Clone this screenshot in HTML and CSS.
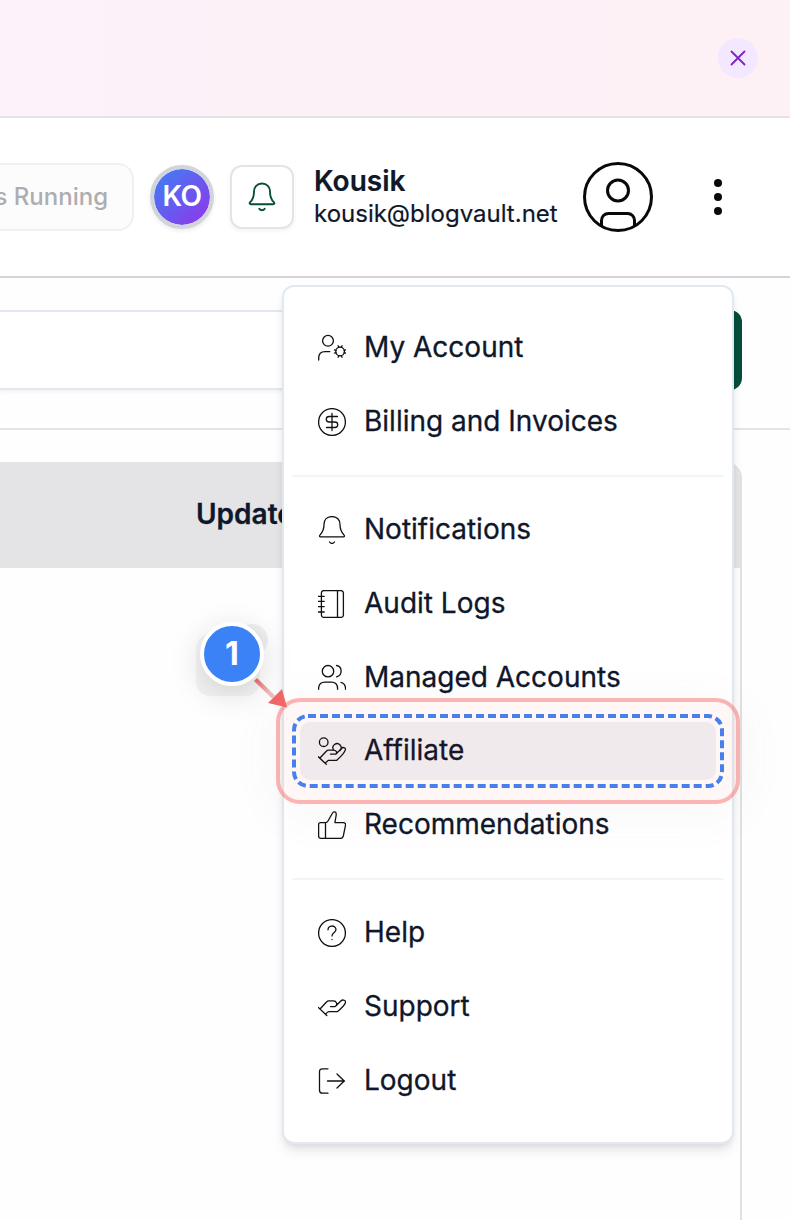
FILE: index.html
```html
<!DOCTYPE html>
<html lang="en">

<head>
    <meta charset="utf-8">
    <title>Dashboard</title>
    <link rel="stylesheet" href="styles.css">
</head>

<body>
    <div class="banner">
        <button class="close">
            <svg width="16" height="16" viewBox="0 0 16 16"><path d="M1.500 1.500l13 13M14.500 1.500l-13 13"/></svg>
        </button>
    </div>

    <div class="header">
        <div class="running"><span>s Running</span></div>
        <div class="avatar">KO</div>
        <div class="bell">
            <svg width="28" height="30" viewBox="0 0 28 30"><path d="M14 1.500c-5 0-8 3.500-8 8 0 6-1 8-3.800 10.600-1 1-.6 2.100.6 2.100h22.400c1.200 0 1.600-1.100.6-2.100C23 17.500 22 15.500 22 9.500c0-4.500-3-8-8-8zM11.300 26.800c1.300 2 4.100 2 5.400 0"/></svg>
        </div>
        <div class="user">
            <b>Kousik</b>
            <span>kousik@blogvault.net</span>
        </div>
        <svg class="profile" width="70" height="70" viewBox="0 0 70 70">
            <circle cx="35" cy="35" r="33.500"/>
            <circle cx="35" cy="28.500" r="10.500"/>
            <path d="M18.500 63v-4.500c0-4 3-7 7-7h19c4 0 7 3 7 7V63"/>
        </svg>
        <svg class="dots" width="8" height="36" viewBox="0 0 8 36"><circle cx="4" cy="4" r="4"/><circle cx="4" cy="18" r="4"/><circle cx="4" cy="32" r="4"/></svg>
    </div>

    <div class="toolbar">
        <div class="search"></div>
        <div class="add"></div>
    </div>

    <div class="table">
        <div class="thead">Updates</div>
    </div>

    <!-- dropdown -->
    <div class="menu">
        <a class="item">
            <svg class="icon" viewBox="0 0 28 28"><circle cx="10" cy="6.800" r="5.400"/><path d="M.7 26v-2c0-4 2.500-6.300 6.300-6.300h4.800"/><circle cx="22.100" cy="17.500" r="4.300"/><path d="M26.200 18.600l1.500.5M23.200 21.600l.9 1.600M21 21.600l-.9 1.600M18 18.600l-1.500.5M18 16.400l-1.500-.5M21 13.400l-.9-1.600M23.200 13.400l.9-1.600M26.200 16.400l1.500-.5"/></svg>
            <span>My Account</span>
        </a>
        <a class="item">
            <svg class="icon" viewBox="0 0 28 28"><circle cx="14" cy="14" r="13.400"/><path d="M14 5.500v17M19.500 8.500h-8.300c-3.900 0-3.900 5.500 0 5.500h5.600c3.900 0 3.900 5.500 0 5.500H8.500"/></svg>
            <span>Billing and Invoices</span>
        </a>
        <hr>
        <a class="item">
            <svg class="icon" viewBox="0 0 28 28"><path d="M14 .6c-5 0-8 3.300-8 7.900 0 5.500-1.200 7.500-3.900 10.400-.9 1-.6 1.900.5 1.900h22.800c1.100 0 1.400-.9.5-1.900C23.200 16 22 14 22 8.500 22 3.900 19 .6 14 .6zM11.500 26c1.200 1.900 3.800 1.900 5 0"/></svg>
            <span>Notifications</span>
        </a>
        <a class="item">
            <svg class="icon" viewBox="0 0 28 28"><rect x="3.400" y=".6" width="22" height="26.800" rx="2.500"/><path d="M19.500.6v26.800M.2 6.300h6M.2 11.400h6M.2 16.600h6M.2 22h6"/></svg>
            <span>Audit Logs</span>
        </a>
        <a class="item">
            <svg class="icon" viewBox="0 0 28 28"><circle cx="10" cy="7.200" r="5.700"/><path d="M.6 25.300v-.6c0-4 2.400-6.600 6.400-6.600h6.200c4 0 6.400 2.600 6.400 6.600v.6M18.600 1.500c6 1 6 10.200 0 11.300M23 18.300c3.200.8 4.600 3.200 4.600 7"/></svg>
            <span>Managed Accounts</span>
        </a>
        <a class="item active">
            <svg class="icon" viewBox="0 0 28 28"><circle cx="5.700" cy="5.200" r="4.300"/><path d="M15.600 13a4.100 4.100 0 1 1 6.400.6"/><path d="M.3 19.800l8 7.500M2 21l6.300-6.800c.7-.8 1.500-1 2.500-1h4.500c2.500 0 4.500 2 2.500 4h-5.300M18 17l5.500-5.500c2-2 4.800-.5 3.700 1.700-.7 2.600-4.200 6.300-8.400 10.100H10.500l-3 2.400"/></svg>
            <span>Affiliate</span>
        </a>
        <a class="item">
            <svg class="icon" viewBox="0 0 28 28"><path d="M7.500 11.600H2.600c-1.300 0-2 .7-2 2v11.300c0 1.600.8 2.500 2.400 2.500h19.300c1.700 0 2.600-.8 3-2.400l2.200-10.700c.3-1.700-.5-2.700-2.200-2.700h-8.400L18.200 4c.4-3.500-2.600-4.200-4-1.500L10 10c-.6 1.100-1.400 1.600-2.500 1.600zM7.500 11.600v15.800"/></svg>
            <span>Recommendations</span>
        </a>
        <hr>
        <a class="item">
            <svg class="icon" viewBox="0 0 28 28"><circle cx="14" cy="14" r="13.400"/><path d="M10 10.800c0-5 8-5 8-.2 0 3.100-4 3.300-4 6.300M14 20.400v.2"/></svg>
            <span>Help</span>
        </a>
        <a class="item">
            <svg class="icon" viewBox="0 0 28 28"><path d="M.3 14.500l8.500 8M2 16l6.500-7c.7-.8 1.500-1.100 2.500-1.100h4.500c3 0 4.300 3.500 2 5.300-.5.400-1 .4-1.800.4h-3.200M17.800 13l5-5c2-2 5.500-.6 4.600 1.700-.9 2.600-4.400 6-8.100 9H11c-1 0-2.200.8-3.200 2.300"/></svg>
            <span>Support</span>
        </a>
        <a class="item">
            <svg class="icon" viewBox="0 0 28 28"><path d="M10 1.800H4.500c-2 0-3 1-3 3v18.400c0 2 1 3 3 3H10M9.500 14h17M19 7l7.200 7-7.200 7"/></svg>
            <span>Logout</span>
        </a>
    </div>

    <!-- step marker over the menu -->
    <div class="highlight">
        <svg width="432" height="74" viewBox="0 0 432 74"><rect x="2" y="2" width="428" height="70" rx="14"/></svg>
    </div>
    <div class="badge-shade"></div>
    <div class="badge-chip"></div>
    <svg class="arrow" width="36" height="34" viewBox="0 0 36 34">
        <defs>
            <linearGradient id="fade" x1="0" y1="0" x2="1" y2="1">
                <stop offset="0" stop-color="#e66363"/>
                <stop offset="0.700" stop-color="#f0bcbc"/>
            </linearGradient>
        </defs>
        <path d="M0 3l3-3 18 17.500-3 3z" fill="url(#fade)"/>
        <path d="M28 11L33 29.500 14 25z" fill="#f16666"/>
    </svg>
    <div class="badge">1</div>
</body>

</html>
```

FILE: styles.css
```css
* {
    box-sizing: border-box;
}

body {
    position: relative;
    width: 790px;
    height: 1220px;
    margin: 0;
    overflow: hidden;
    display: flex;
    flex-direction: column;
    background: #fefefe;
    color: #0f172a;
    font-family: Inter, "Liberation Sans", sans-serif;
}

svg {
    display: block;
    flex: none;
    fill: none;
    stroke-linecap: round;
    stroke-linejoin: round;
}

/* banner */
.banner {
    flex: none;
    height: 118px;
    padding: 0 32px;
    display: flex;
    align-items: center;
    justify-content: flex-end;
    border-bottom: 2px solid #e4e4e7;
    background: linear-gradient(90deg, #fdf1fa, #fdf1f6);
}

.close {
    width: 40px;
    height: 40px;
    padding: 0;
    display: flex;
    align-items: center;
    justify-content: center;
    border: 0;
    border-radius: 50%;
    background: #f3e8ff;
}

.close svg {
    stroke: #7e22ce;
    stroke-width: 1.8;
}

/* header */
.header {
    flex: none;
    height: 160px;
    display: flex;
    align-items: center;
    border-bottom: 2px solid #d4d4d8;
    background: #fff;
}

.running {
    width: 134px;
    height: 68px;
    padding: 0 24px 2px 0;
    display: flex;
    align-items: center;
    justify-content: flex-end;
    border: 2px solid #f0f0f1;
    border-left: 0;
    border-radius: 0 16px 16px 0;
    background: #fcfcfc;
    color: #adadb1;
    font-size: 24px;
    font-weight: 500;
    white-space: nowrap;
}

.avatar {
    width: 64px;
    height: 64px;
    margin-left: 16px;
    border: 4px solid #d1d5db;
    border-radius: 50%;
    background: linear-gradient(135deg, #3b82f6, #9333ea) padding-box;
    box-shadow: 0 2px 4px rgba(0, 0, 0, .08);
    color: #fff;
    font-size: 28px;
    font-weight: 600;
    line-height: 54px;
    text-align: center;
    letter-spacing: -.5px;
}

.bell {
    width: 64px;
    height: 64px;
    margin-left: 16px;
    display: flex;
    align-items: center;
    justify-content: center;
    border: 2px solid #e4e4e7;
    border-radius: 12px;
    background: #fff;
    box-shadow: 0 2px 4px rgba(0, 0, 0, .05);
}

.bell svg {
    stroke: #064e3b;
    stroke-width: 1.9;
}

.user {
    width: 269px;
    margin-left: 20px;
    display: flex;
    flex-direction: column;
    font-size: 24px;
    line-height: 32px;
    -webkit-text-stroke: .2px #0f172a;
}

.user b {
    height: 33px;
    font-size: 28px;
    font-weight: 600;
}

.profile {
    stroke: #09090b;
    stroke-width: 3;
}

.dots {
    margin-left: 61px;
    fill: #09090b;
}

/* search row */
.toolbar {
    flex: none;
    height: 152px;
    padding: 32px 48px 38px 0;
    display: flex;
    gap: 16px;
    border-bottom: 2px solid #e4e4e7;
}

.search {
    flex: 1;
    border: 2px solid #e2e8f0;
    border-left: 0;
    border-radius: 0 12px 12px 0;
    background: #fff;
    box-shadow: 0 2px 4px rgba(0, 0, 0, .05);
}

.add {
    width: 200px;
    height: 80px;
    border-radius: 12px;
    background: #064e3b;
}

/* table */
.table {
    flex: 1;
    width: 742px;
    margin-top: 32px;
    border-right: 2px solid #e1e1e2;
    border-radius: 0 16px 0 0;
}

.thead {
    height: 106px;
    padding-left: 196px;
    border-radius: 0 14px 0 0;
    background: #e4e4e6;
    color: #0f172a;
    font-size: 28px;
    font-weight: 600;
    line-height: 104px;
    -webkit-text-stroke: .3px #0f172a;
}

/* dropdown */
.menu {
    position: absolute;
    left: 282px;
    top: 285px;
    width: 452px;
    height: 859px;
    padding: 24px 8px;
    border: 2px solid #e2e8f0;
    border-radius: 12px;
    background: #fff;
    box-shadow: 0 8px 12px -2px rgba(0, 0, 0, .1), 0 4px 8px -4px rgba(0, 0, 0, .1);
}

.item {
    height: 73.9px;
    padding: 0 26px;
    display: flex;
    align-items: center;
    gap: 18px;
    font-size: 28px;
    font-weight: 400;
    -webkit-text-stroke: .3px #0f172a;
}

.item span {
    padding-bottom: 2px;
}

.item.active {
    height: 58px;
    margin: 8px 8px 7.9px;
    padding: 0 18px;
    border-radius: 10px;
    background: #f1f3f5;
}

.menu hr {
    height: 2px;
    margin: 16px 0;
    border: 0;
    background: #f1f5f9;
}

.icon {
    width: 28px;
    height: 28px;
    stroke: #111;
    stroke-width: 1.3;
}

/* step marker */
.highlight {
    position: absolute;
    left: 276px;
    top: 698px;
    width: 464px;
    height: 106px;
    padding: 12px;
    border: 4px solid rgba(248, 113, 113, .5);
    border-radius: 24px;
    background: rgba(255, 0, 0, .035);
    box-shadow: 0 8px 50px rgba(160, 110, 110, .06);
}

.highlight rect {
    stroke: #477fec;
    stroke-width: 4;
    stroke-linecap: butt;
    stroke-dasharray: 8 4;
}

.badge-shade {
    position: absolute;
    left: 196px;
    top: 634px;
    width: 64px;
    height: 62px;
    border-radius: 14px;
    background: rgba(0, 0, 0, .04);
}

.badge-chip {
    position: absolute;
    left: 236px;
    top: 624px;
    width: 32px;
    height: 32px;
    border-radius: 50%;
    background: #eeeff0;
}

.arrow {
    position: absolute;
    left: 254px;
    top: 678px;
}

.badge {
    position: absolute;
    left: 200px;
    top: 622px;
    width: 64px;
    height: 64px;
    border: 4px solid #fff;
    border-radius: 50%;
    background: #3b82f6;
    box-shadow: 0 8px 32px rgba(0, 0, 0, .15);
    color: #fff;
    font-size: 32px;
    font-weight: 700;
    line-height: 56px;
    text-align: center;
}
```
